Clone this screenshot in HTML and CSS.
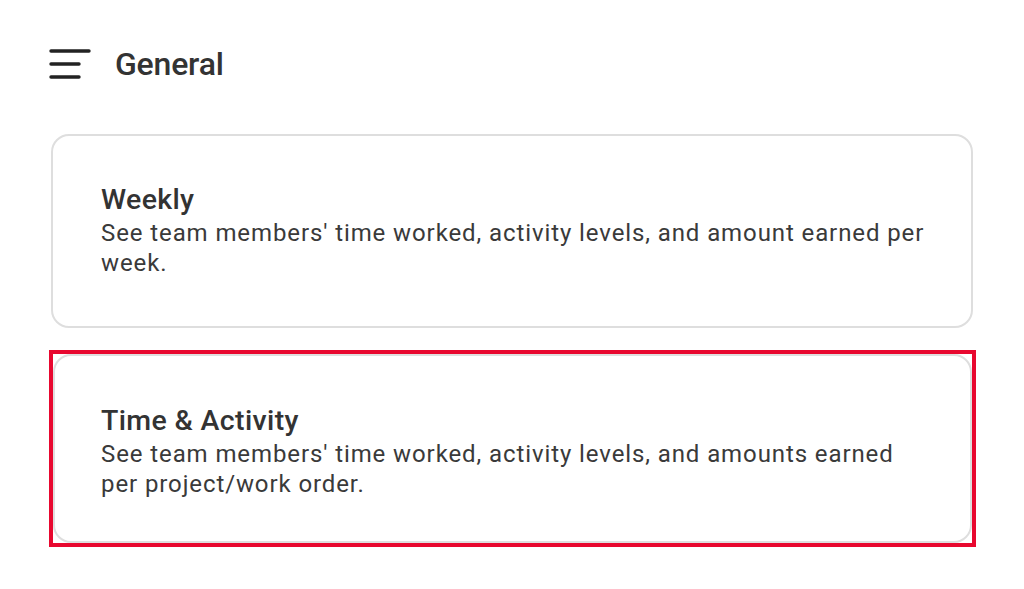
FILE: index.html
```html
<!DOCTYPE html>
<html lang="en">
<head>
    <meta charset="UTF-8">
    <title>Reports - General</title>
    <link rel="stylesheet" href="styles.css">
</head>
<body>

<div class="page">
    <header class="top-bar">
        <button class="menu-btn" aria-label="Menu">
            <svg width="42" height="32" viewBox="0 0 42 32">
                <line x1="2" y1="3" x2="40" y2="3" />
                <line x1="2" y1="16" x2="30" y2="16" />
                <line x1="2" y1="29" x2="30" y2="29" />
            </svg>
        </button>
        <h1>General</h1>
    </header>

    <div class="report-list">
        <div class="report-card">
            <h2>Weekly</h2>
            <p>See team members' time worked, activity levels, and amount earned per week.</p>
        </div>
        <div class="highlight">
            <div class="report-card">
                <h2>Time &amp; Activity</h2>
                <p>See team members' time worked, activity levels, and amounts earned per project/work order.</p>
            </div>
        </div>
    </div>
</div>

</body>
</html>
```

FILE: styles.css
```css
body {
    margin: 0;
    padding: 0;
    background: #fff;
    font-family: Roboto, 'Noto Sans', sans-serif;
    color: #3a3a3a;
}

.page {
    padding: 0 51px;
}

.top-bar {
    display: flex;
    align-items: center;
    gap: 24px;
    height: 128px;
}

.menu-btn {
    background: none;
    border: none;
    padding: 0;
    margin-left: -2px;
    display: flex;
    cursor: pointer;
}

.menu-btn line {
    stroke: #222;
    stroke-width: 3.4;
    stroke-linecap: round;
}

h1 {
    margin: 0;
    font-size: 32px;
    font-weight: 500;
    color: #333;
    letter-spacing: -0.2px;
}

.report-list {
    display: flex;
    flex-direction: column;
    gap: 22px;
    margin-top: 6px;
}

.report-card {
    border: 2px solid #dedede;
    border-radius: 18px;
    padding: 46px 46px 48px 48px;
    background: #fff;
}

.report-card h2 {
    margin: 0;
    font-size: 28.5px;
    line-height: 36px;
    font-weight: 500;
    color: #333;
    letter-spacing: 0.35px;
}

.report-card p {
    margin: 0;
    font-size: 24px;
    line-height: 30px;
    letter-spacing: 0.9px;
    color: #3a3a3a;
}

.highlight {
    border: 4px solid #e8082f;
    margin: 0 -3px 0 -2px;
}

.highlight .report-card {
    padding: 47px 38px 42px 46px;
}
```
